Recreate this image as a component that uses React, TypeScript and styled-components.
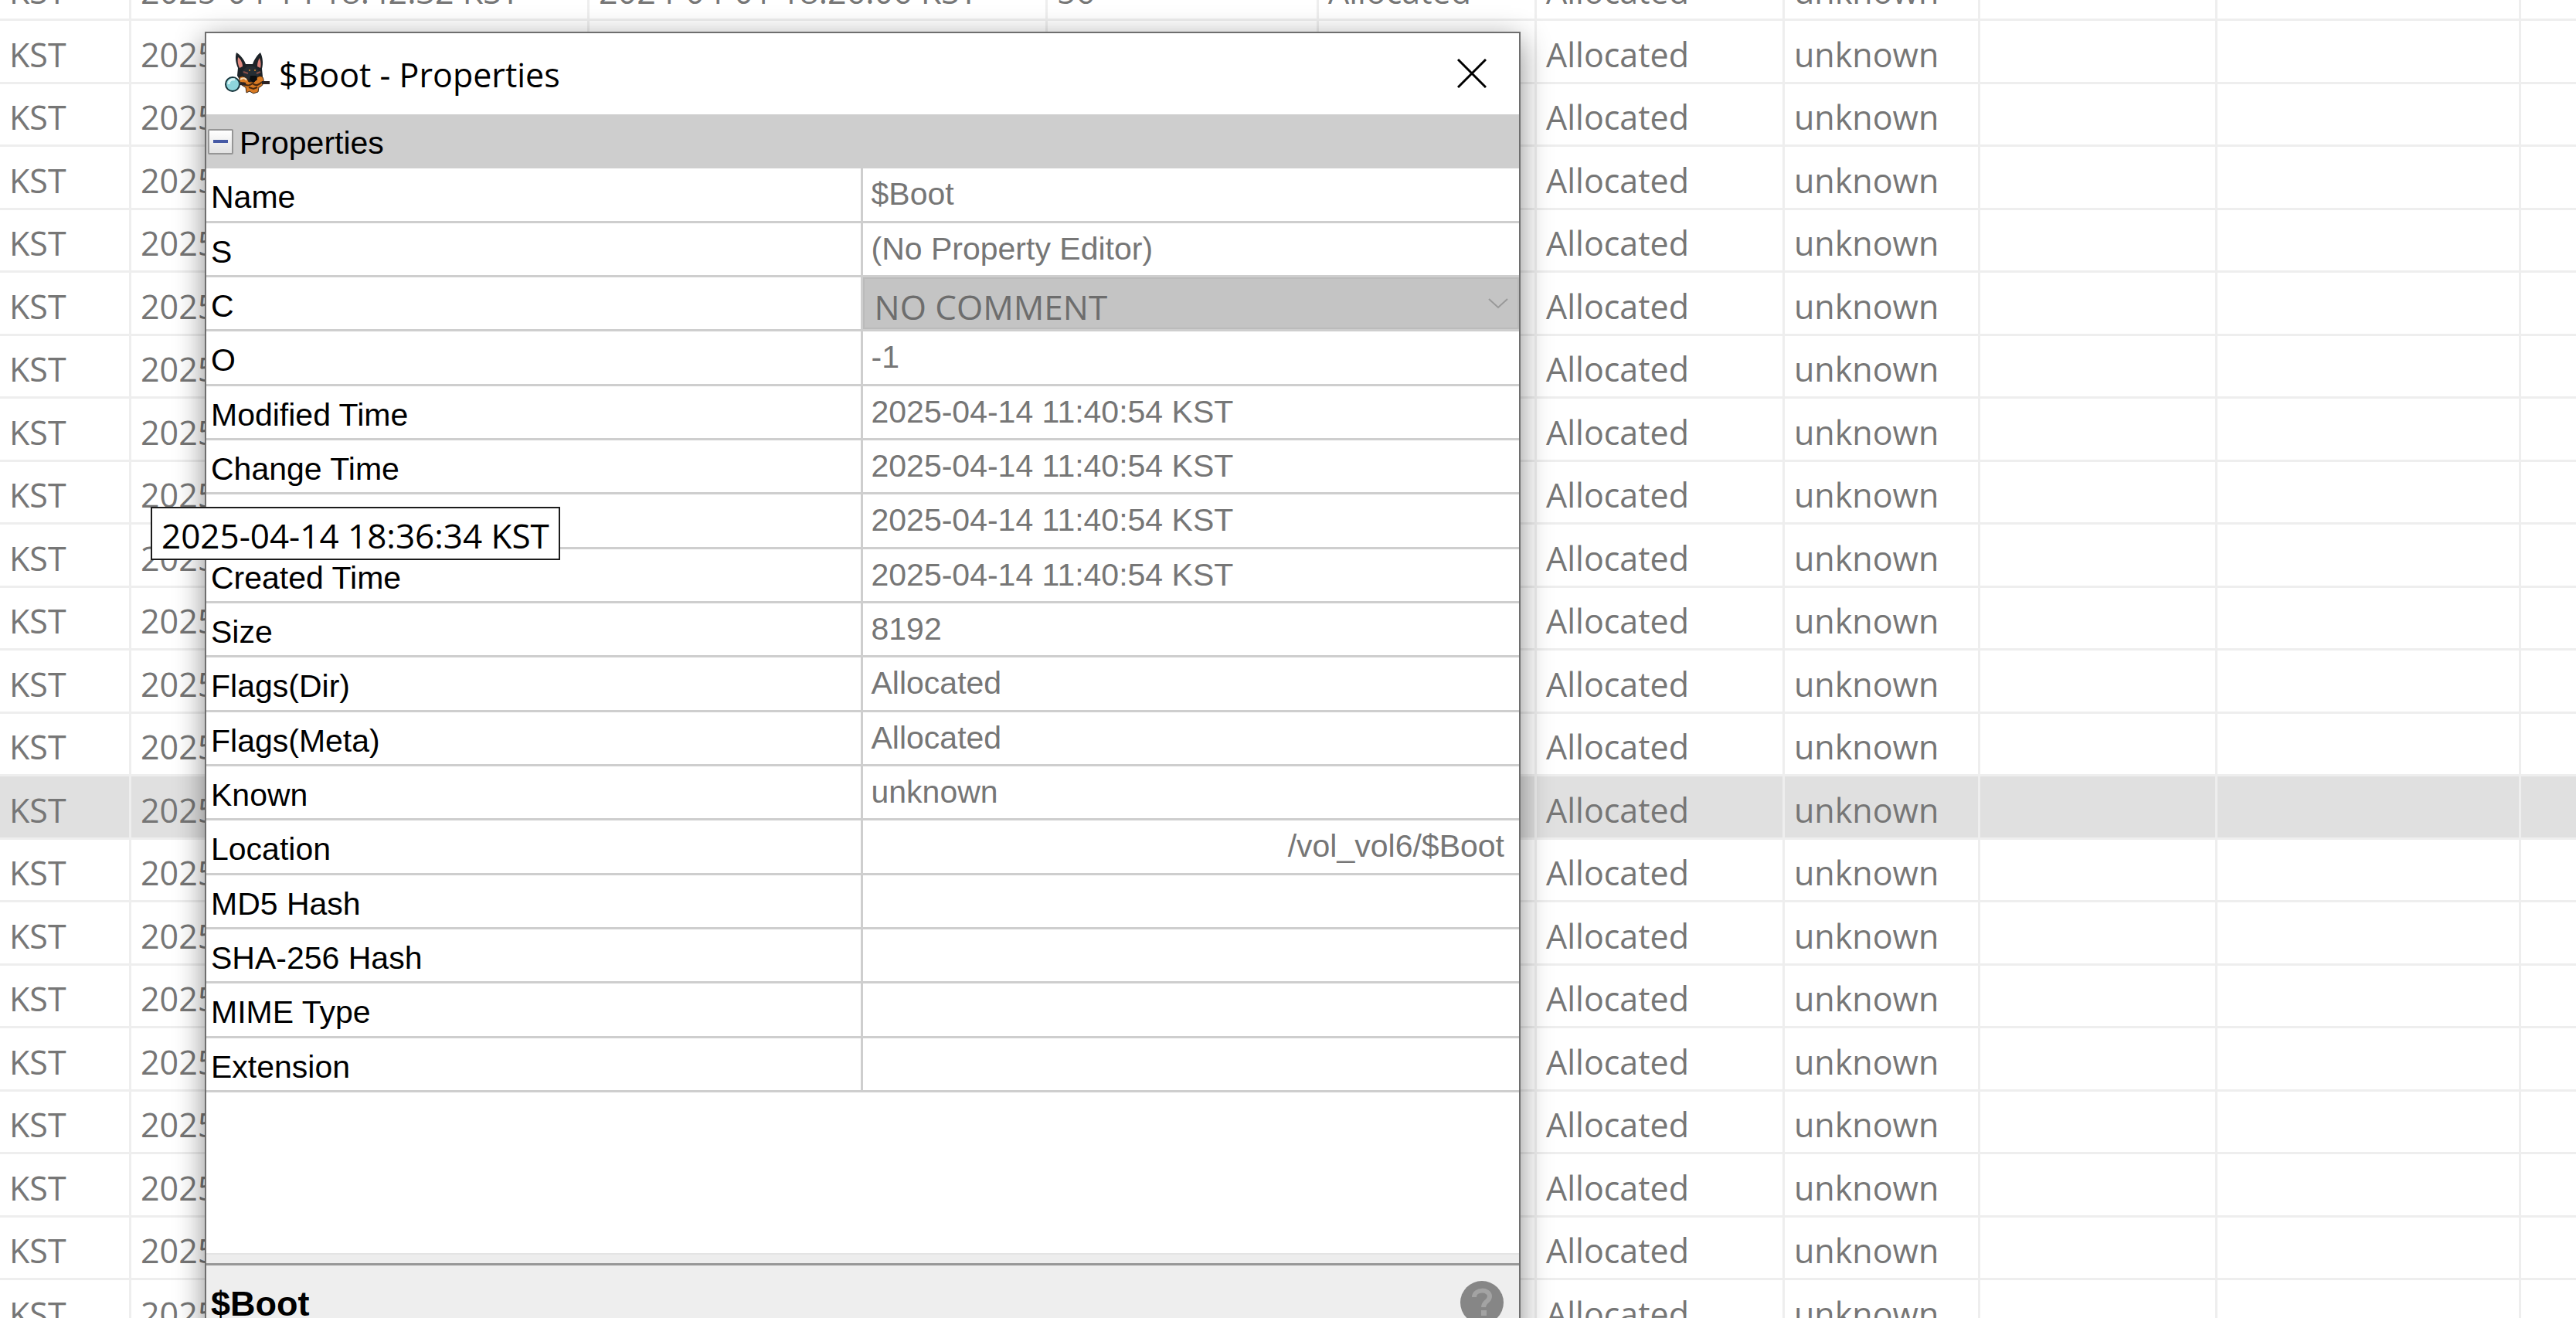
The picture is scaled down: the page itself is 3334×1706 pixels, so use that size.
import React from "react";
import styled, { createGlobalStyle } from "styled-components";

const uiFont = `"Open Sans", "Noto Sans", "Noto Sans CJK KR", sans-serif`;
const sheetFont = `"Liberation Sans", Arial, sans-serif`;

const GlobalStyle = createGlobalStyle`
  * { box-sizing: border-box; }
  html, body { margin: 0; background: #ffffff; overflow: hidden; }
`;

const Desktop = styled.main`
  position: relative;
  height: 100vh;
  overflow: hidden;
  font-family: ${uiFont};
  font-size: 43px;
  color: #767676;
`;

/* ---- file listing ---- */

const Listing = styled.table`
  width: 100%;
  margin-top: -54px;
  border-collapse: separate;
  border-spacing: 0;
  table-layout: fixed;
`;

const Column = styled.col<{ $width?: number }>`
  width: ${(p) => (p.$width ? `${p.$width}px` : "auto")};
`;

const ListingRow = styled.tr<{ $selected?: boolean }>`
  height: 81px;
  background: ${(p) => (p.$selected ? "#e0e0e0" : "#ffffff")};
  &:nth-child(even) { height: 82px; }
`;

const ListingCell = styled.td`
  padding: 0 0 5px 12px;
  border-right: 3px solid #eeeeee;
  border-bottom: 3px solid #eeeeee;
  line-height: 60px;
  vertical-align: bottom;
  white-space: nowrap;
  overflow: hidden;
  &:last-child { border-right: 0; }
`;

/* ---- properties window ---- */

const Dialog = styled.section`
  position: absolute;
  top: 41px;
  left: 265px;
  width: 1703px;
  display: flex;
  flex-direction: column;
  background: #ffffff;
  border: 2px solid #6e6e6e;
  box-shadow: 0 10px 36px rgba(0, 0, 0, 0.45);
`;

const TitleBar = styled.header`
  display: flex;
  align-items: center;
  height: 105px;
  padding: 0 42px 2px 24px;
  gap: 10px;
  color: #000000;
`;

const Title = styled.h1`
  flex: 1;
  margin: 0;
  padding-top: 4px;
  font-size: 43px;
  font-weight: 400;
  line-height: 60px;
`;

const CloseButton = styled.button`
  display: flex;
  padding: 0;
  border: 0;
  background: none;
`;

const Group = styled.div`
  display: flex;
  align-items: center;
  height: 70px;
  padding-left: 2px;
  gap: 8px;
  background: #cecece;
  font-family: ${sheetFont};
  font-size: 41px;
  color: #000000;
`;

const GroupName = styled.span`
  padding-top: 4px;
`;

const Toggle = styled.button`
  display: grid;
  place-items: center;
  width: 33px;
  height: 33px;
  padding: 0;
  border: 2px solid #969696;
  border-radius: 2px;
  background: linear-gradient(#ffffff, #e2e2e2);
`;

const Minus = styled.span`
  width: 19px;
  height: 4px;
  background: #465aa5;
`;

const Sheet = styled.table`
  width: 100%;
  border-collapse: separate;
  border-spacing: 0;
  table-layout: fixed;
  font-family: ${sheetFont};
  font-size: 41px;
`;

const SheetRow = styled.tr`
  height: 70px;
  &:nth-child(3n + 1) { height: 71px; }
`;

const SheetLabel = styled.th`
  width: 50%;
  padding: 6px 0 0 6px;
  border-right: 3px solid #cecece;
  border-bottom: 3px solid #cecece;
  font-weight: 400;
  line-height: 60px;
  text-align: left;
  color: #000000;
`;

const SheetValue = styled.td<{ $align?: "left" | "right"; $flush?: boolean }>`
  padding: ${(p) => (p.$flush ? "0" : "0 19px 2px 11px")};
  border-bottom: 3px solid #cecece;
  line-height: 60px;
  text-align: ${(p) => p.$align ?? "left"};
`;

const SelectFrame = styled.div`
  position: relative;
  display: flex;
  height: 67px;
`;

const CommentSelect = styled.select`
  flex: 1;
  appearance: none;
  padding: 6px 60px 0 13px;
  border: 2px solid #bbbbbb;
  border-radius: 0;
  background: #c4c4c4;
  color: #6d6d6d;
  opacity: 1;
  font-family: ${uiFont};
  font-size: 44px;
`;

const Chevron = styled.svg`
  position: absolute;
  right: 14px;
  top: 27px;
`;

const Blank = styled.div`
  height: 208px;
`;

const Splitter = styled.div`
  height: 16px;
  background: #ededed;
  border-top: 2px solid #e4e4e4;
  border-bottom: 3px solid #979797;
`;

const Description = styled.footer`
  display: flex;
  justify-content: space-between;
  align-items: flex-start;
  min-height: 160px;
  padding: 20px 20px 0 6px;
  background: #eeeeee;
  font-family: ${sheetFont};
  color: #000000;
`;

const DescriptionTitle = styled.h2`
  margin: 0;
  font-size: 45px;
  line-height: 60px;
`;

const HelpButton = styled.button`
  display: flex;
  padding: 0;
  border: 0;
  background: none;
`;

const Tooltip = styled.div`
  position: absolute;
  top: 656px;
  left: 195px;
  padding: 5px 12px 0 12px;
  border: 2px solid #1c1c1c;
  background: #ffffff;
  color: #000000;
  font-size: 44px;
  line-height: 60px;
  white-space: nowrap;
`;

function DogIcon() {
  return (
    <svg width="60" height="56" viewBox="0 0 60 56" aria-hidden="true">
      <path d="M15 1 C20 4 25 10 27 16 L36 16 C38 10 42 4 46 1 C49 7 50 15 48 22 L49 32 L44 41 L22 41 L16 31 L17 21 C14 14 13 7 15 1Z" fill="#1d2328" />
      <path d="M17 7 C21 10 23 15 23 19 L19 21 C17 17 16 12 17 7Z" fill="#e08a80" />
      <path d="M45 8 C47 13 47 18 46 21 L42 19 C42 15 43 11 45 8Z" fill="#d98078" />
      <path d="M22 25 L29 19 L38 19 L45 26 L42 36 L27 36Z" fill="#252d33" />
      <path d="M19 33 C24 30 29 34 31 39 L38 39 C41 32 45 30 49 33 C52 39 49 45 44 46 L43 52 L37 54 L32 51 L28 53 L27 46 C21 44 18 39 19 33Z" fill="#d97a22" stroke="#3a2412" strokeWidth="1" />
      <path d="M24 40 C29 46 33 43 36 41 C40 45 44 43 48 39 M31 46 L37 48 L42 46" fill="none" stroke="#4a2a10" strokeWidth="2" />
      <path d="M33 31 L41 31 L42 36 L37 40 L32 36Z" fill="#0c0e10" />
      <path d="M24 26 L30 28 M46 26 L41 28" stroke="#8d5048" strokeWidth="2" />
      <circle cx="32" cy="24" r="1" fill="#e08a2e" />
      <circle cx="39" cy="24" r="1" fill="#e08a2e" />
      <path d="M20 41 L27 42 M48 40 L58 40" stroke="#2b2222" strokeWidth="4" />
      <path d="M20 36 C23 33 27 34 28 37" fill="none" stroke="#f1d9b8" strokeWidth="2" />
      <circle cx="10" cy="42" r="9" fill="#8ed5dc" stroke="#16333a" strokeWidth="2" />
      <path d="M5 42 C5 37 9 35 13 36" fill="none" stroke="#d9f5f6" strokeWidth="3" />
    </svg>
  );
}

const columns = [170, 593, 593, 351, 282, 321, 253, 307, 393];

const topRow = ["KST", "2025-04-14 18:42:32 KST", "2024-04-01 18:26:06 KST", "56", "Allocated", "Allocated", "unknown"];
const plainRow = ["KST", "2025-04-14 18:36:34 KST", "", "", "", "Allocated", "unknown"];
const listing = [topRow, ...Array.from({ length: 21 }, () => plainRow)];
const selectedIndex = 13;

type Property = { label: string; value?: string; kind?: "select" | "path" };

const stamp = "2025-04-14 11:40:54 KST";
const properties: Property[] = [
  { label: "Name", value: "$Boot" },
  { label: "S", value: "(No Property Editor)" },
  { label: "C", value: "NO COMMENT", kind: "select" },
  { label: "O", value: "-1" },
  { label: "Modified Time", value: stamp },
  { label: "Change Time", value: stamp },
  { label: "", value: stamp },
  { label: "Created Time", value: stamp },
  { label: "Size", value: "8192" },
  { label: "Flags(Dir)", value: "Allocated" },
  { label: "Flags(Meta)", value: "Allocated" },
  { label: "Known", value: "unknown" },
  { label: "Location", value: "/vol_vol6/$Boot", kind: "path" },
  { label: "MD5 Hash" },
  { label: "SHA-256 Hash" },
  { label: "MIME Type" },
  { label: "Extension" },
];

function PropertyRow({ label, value, kind }: Property) {
  return (
    <SheetRow>
      <SheetLabel scope="row">{label}</SheetLabel>
      {kind === "select" ? (
        <SheetValue $flush>
          <SelectFrame>
            <CommentSelect aria-label={label} disabled defaultValue={value}>
              <option>{value}</option>
            </CommentSelect>
            <Chevron width="26" height="14" viewBox="0 0 26 14" aria-hidden="true">
              <path d="M1 1 L13 12 L25 1" fill="none" stroke="#999999" strokeWidth="2" />
            </Chevron>
          </SelectFrame>
        </SheetValue>
      ) : (
        <SheetValue $align={kind === "path" ? "right" : "left"}>{value}</SheetValue>
      )}
    </SheetRow>
  );
}

export default function App() {
  return (
    <Desktop>
      <GlobalStyle />
      <Listing>
        <colgroup>
          {columns.map((width, i) => (
            <Column key={i} $width={width} />
          ))}
          <Column />
        </colgroup>
        <tbody>
          {listing.map((cells, r) => (
            <ListingRow key={r} $selected={r === selectedIndex}>
              {Array.from({ length: columns.length + 1 }, (_, c) => (
                <ListingCell key={c}>{cells[c]}</ListingCell>
              ))}
            </ListingRow>
          ))}
        </tbody>
      </Listing>

      <Dialog aria-label="$Boot - Properties">
        <TitleBar>
          <DogIcon />
          <Title>$Boot - Properties</Title>
          <CloseButton aria-label="Close">
            <svg width="38" height="38" viewBox="0 0 38 38" aria-hidden="true">
              <path d="M1 1 L37 37 M37 1 L1 37" stroke="#000000" strokeWidth="3" />
            </svg>
          </CloseButton>
        </TitleBar>
        <Group>
          <Toggle aria-label="Collapse Properties">
            <Minus />
          </Toggle>
          <GroupName>Properties</GroupName>
        </Group>
        <Sheet>
          <tbody>
            {properties.map((property, i) => (
              <PropertyRow key={i} {...property} />
            ))}
          </tbody>
        </Sheet>
        <Blank />
        <Splitter />
        <Description>
          <DescriptionTitle>$Boot</DescriptionTitle>
          <HelpButton aria-label="Help">
            <svg width="56" height="56" viewBox="0 0 56 56" aria-hidden="true">
              <circle cx="28" cy="28" r="28" fill="#868686" />
              <path d="M18 21 C18 10 38 10 38 20 C38 27 30 26 30 34" fill="none" stroke="#a3a3a3" strokeWidth="6" />
              <rect x="27" y="38" width="7" height="7" fill="#a3a3a3" />
            </svg>
          </HelpButton>
        </Description>
      </Dialog>

      <Tooltip role="tooltip">2025-04-14 18:36:34 KST</Tooltip>
    </Desktop>
  );
}
